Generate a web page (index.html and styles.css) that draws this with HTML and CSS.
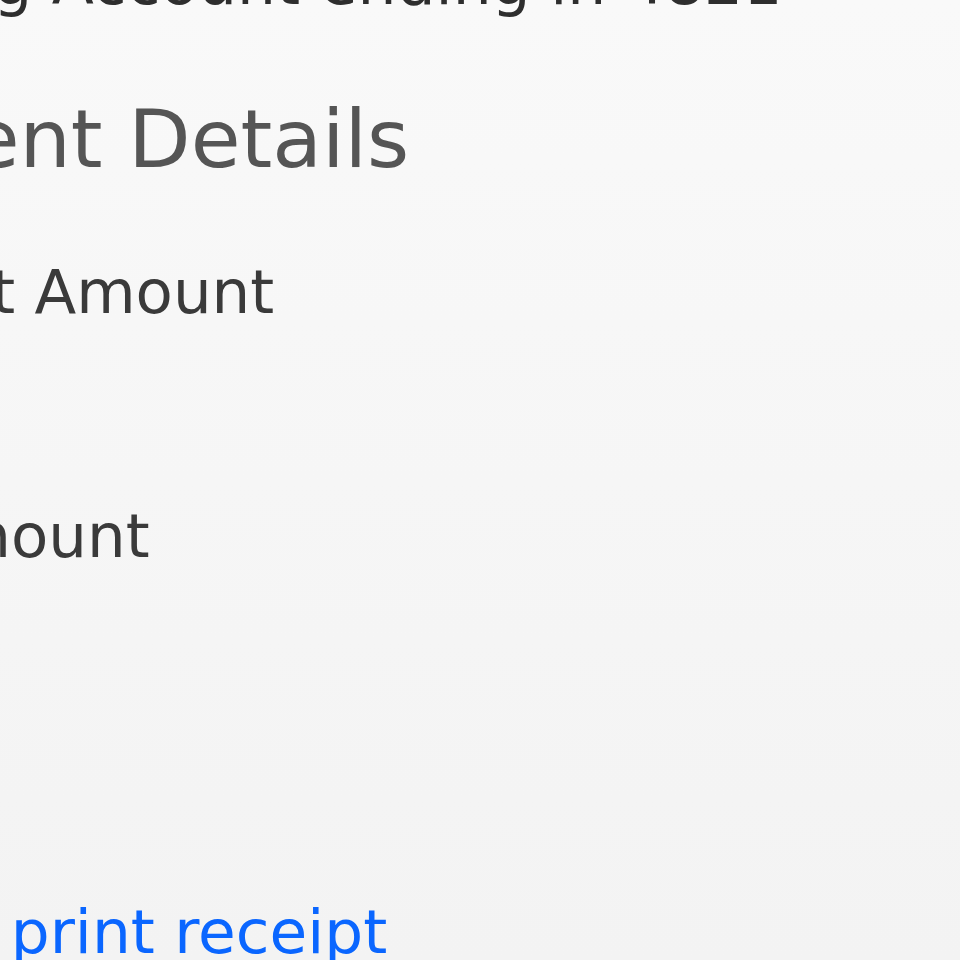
FILE: index.html
```html
<!DOCTYPE html>
<html lang="en">
<head>
<meta charset="utf-8">
<title>Payment Details</title>
<link rel="stylesheet" href="styles.css">
</head>
<body>
<main class="page">
  <p class="account">Checking Account ending in 4821</p>
  <h2 class="section-title">Payment Details</h2>
  <dl class="details">
    <dt class="label label-first">Payment Amount</dt>
    <dt class="label label-total">Total Amount</dt>
  </dl>
  <a class="receipt-link" href="#">Email or print receipt</a>
</main>
</body>
</html>
```

FILE: styles.css
```css
html, body {
  margin: 0;
  padding: 0;
  height: 100%;
}

body {
  background: linear-gradient(to bottom, #f9f9f9 0%, #f3f3f3 100%);
  font-family: "DejaVu Sans", Verdana, sans-serif;
  overflow: hidden;
}

.page {
  margin-left: -252px;
  margin-top: -53px;
  display: flex;
  flex-direction: column;
  align-items: flex-start;
}

.account {
  margin: 0;
  font-size: 61.5px;
  line-height: 72px;
  color: #2e2e2e;
}

.section-title {
  margin: 72px 0 0;
  font-size: 81px;
  line-height: 96px;
  font-weight: normal;
  color: #555555;
}

.details {
  margin: 69px 0 0;
  display: flex;
  flex-direction: column;
}

.label {
  font-size: 61px;
  line-height: 72px;
  color: #3a3a3a;
}

.label-total {
  margin-top: 172px;
}

.receipt-link {
  margin-top: 324px;
  margin-left: -9px;
  font-size: 61.3px;
  line-height: 72px;
  color: #0a66ff;
  text-decoration: none;
}
```
